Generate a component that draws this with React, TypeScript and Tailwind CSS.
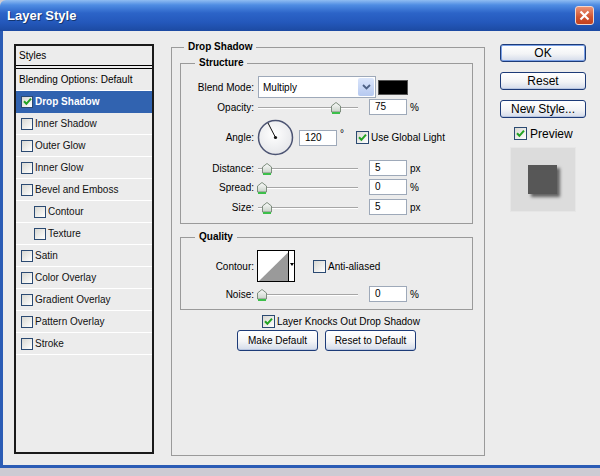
import React from "react";

type Item = { label: string; checked?: boolean; indent?: boolean; selected?: boolean };

const items: Item[] = [
  { label: "Drop Shadow", checked: true, selected: true },
  { label: "Inner Shadow" },
  { label: "Outer Glow" },
  { label: "Inner Glow" },
  { label: "Bevel and Emboss" },
  { label: "Contour", indent: true },
  { label: "Texture", indent: true },
  { label: "Satin" },
  { label: "Color Overlay" },
  { label: "Gradient Overlay" },
  { label: "Pattern Overlay" },
  { label: "Stroke" },
];

function CheckBox({ checked = false, small = false }: { checked?: boolean; small?: boolean }) {
  return (
    <span
      className={`flex shrink-0 items-center justify-center border border-[#2b4a72] bg-[linear-gradient(135deg,#d8d8d2,#ffffff)] ${
        small ? "h-[12px] w-[12px]" : "h-[13px] w-[13px]"
      }`}
    >
      {checked && (
        <svg width="9" height="9" viewBox="0 0 9 9">
          <path d="M1 4.3 L3.4 6.8 L8 1.6" fill="none" stroke="#22a322" strokeWidth="2" />
        </svg>
      )}
    </span>
  );
}

function Thumb() {
  return (
    <svg width="10" height="12" viewBox="0 0 10 12">
      <defs>
        <linearGradient id="thumbFill" x1="0" y1="0" x2="0" y2="1">
          <stop offset="0" stopColor="#fbfcfb" />
          <stop offset="1" stopColor="#c9d2c9" />
        </linearGradient>
      </defs>
      <path d="M0.5 4 L5 0.5 L9.5 4 V10 H0.5 Z" fill="url(#thumbFill)" stroke="#7d8d7d" />
      <path d="M1 11 H9" stroke="#3cbf4a" strokeWidth="2" />
    </svg>
  );
}

function Slider({ at }: { at: number }) {
  return (
    <div className="relative h-[16px] w-[100px] shrink-0">
      <div className="absolute left-0 right-0 top-[8px] h-[2px] border-t border-[#a6a6a6] bg-white" />
      <div className="absolute top-[3px]" style={{ left: at - 5 }}>
        <Thumb />
      </div>
    </div>
  );
}

function NumBox({ value }: { value: string }) {
  return (
    <div className="h-[16px] w-[38px] shrink-0 border border-[#9ea9b9] bg-white pl-[5px] text-[10px] leading-[14px]">
      {value}
    </div>
  );
}

function Label({ children }: { children: React.ReactNode }) {
  return <div className="w-[73px] shrink-0 text-right text-[10px]">{children}</div>;
}

function SliderRow({ label, at, value, unit, className }: { label: string; at: number; value: string; unit: string; className: string }) {
  return (
    <div className={`flex h-[16px] items-center ${className}`}>
      <Label>{label}</Label>
      <div className="ml-[4px]">
        <Slider at={at} />
      </div>
      <div className="ml-[11px]">
        <NumBox value={value} />
      </div>
      <span className="ml-[3px] text-[10px]">{unit}</span>
    </div>
  );
}

function XpButton({ children, isDefault = false, className = "" }: { children: React.ReactNode; isDefault?: boolean; className?: string }) {
  return (
    <div
      className={`flex items-center justify-center rounded-[3px] border border-[#1d3b78] bg-[linear-gradient(to_bottom,#ffffff,#f3f4f6_55%,#d3dbea)] ${
        isDefault ? "shadow-[inset_0_0_0_1px_#7aa0e6]" : "shadow-[inset_0_-1px_0_#b9c6e0]"
      } ${className}`}
    >
      {children}
    </div>
  );
}

function Legend({ children, className = "" }: { children: React.ReactNode; className?: string }) {
  return <legend className={`px-[4px] text-[10px] font-bold leading-[12px] ${className}`}>{children}</legend>;
}

function StylesList() {
  return (
    <div className="ml-[11px] mt-[13px] h-[410px] w-[140px] shrink-0 border-2 border-[#1a1a1a]">
      <div className="flex h-[23px] items-center border-b-[4px] border-double border-black pl-[3px] text-[10px]">Styles</div>
      <div className="flex h-[22px] items-center border-b border-white pl-[3px] text-[10px]">Blending Options: Default</div>
      {items.map((it) => (
        <div
          key={it.label}
          className={`flex h-[22px] items-center gap-[2px] border-b text-[10px] ${
            it.selected ? "border-[#3163b0] bg-[#3163b0] font-bold text-white" : "border-white text-[#111]"
          } ${it.indent ? "pl-[18px]" : "pl-[5px]"}`}
        >
          <CheckBox checked={it.checked} small />
          <span>{it.label}</span>
        </div>
      ))}
    </div>
  );
}

function AngleDial() {
  return (
    <svg width="37" height="37" viewBox="0 0 37 37">
      <defs>
        <radialGradient id="dialFill" cx="0.45" cy="0.4" r="0.6">
          <stop offset="0" stopColor="#ffffff" />
          <stop offset="1" stopColor="#e6e7ea" />
        </radialGradient>
      </defs>
      <circle cx="18.5" cy="18.5" r="17" fill="url(#dialFill)" stroke="#4c5473" strokeWidth="1.5" />
      <path d="M18.5 18.5 L11 4" stroke="#111" strokeWidth="1" />
      <circle cx="18.5" cy="18.5" r="1.6" fill="#111" />
    </svg>
  );
}

function ContourPreview() {
  return (
    <svg width="38" height="32" viewBox="0 0 38 32">
      <rect x="0.5" y="0.5" width="37" height="31" fill="#fff" stroke="#000" />
      <polygon points="2,31 31.5,2 31.5,31" fill="#9a9a9a" />
      <path d="M31.5 1 V31" stroke="#000" />
      <polygon points="33,13 37,13 35,16" fill="#000" />
    </svg>
  );
}

function DropShadowPanel() {
  return (
    <fieldset className="ml-[17px] mt-[10px] h-[415px] w-[314px] shrink-0 border border-[#9a9a9a]">
      <Legend className="ml-[12px]">Drop Shadow</Legend>
      <div className="pl-[8px] pt-[4px]">
        <fieldset className="w-[293px] border border-[#9a9a9a] pb-[8px] pt-[7px]">
          <Legend className="ml-[14px]">Structure</Legend>
          <div className="flex h-[22px] items-center">
            <Label>Blend Mode:</Label>
            <div className="ml-[4px] flex h-[22px] w-[118px] items-center border border-[#9ea9b9] bg-white pl-[4px] text-[10px]">
              <span className="flex-1">Multiply</span>
              <span className="mr-[1px] flex h-[18px] w-[16px] items-center justify-center rounded-[2px] bg-[linear-gradient(to_bottom,#dbe6fb,#b6c9f0)]">
                <svg width="9" height="6" viewBox="0 0 9 6">
                  <path d="M1 1 L4.5 4.5 L8 1" fill="none" stroke="#4d6185" strokeWidth="1.8" />
                </svg>
              </span>
            </div>
            <div className="ml-[2px] h-[15px] w-[30px] border border-[#555] bg-black" />
          </div>
          <SliderRow className="mt-[1px]" label="Opacity:" at={78} value="75" unit="%" />
          <div className="mt-[4px] flex h-[37px] items-center">
            <Label>Angle:</Label>
            <div className="ml-[3px]">
              <AngleDial />
            </div>
            <div className="ml-[5px]">
              <NumBox value="120" />
            </div>
            <span className="ml-[3px] self-start pt-[10px] text-[10px] leading-[10px]">°</span>
            <div className="ml-[12px]">
              <CheckBox checked />
            </div>
            <span className="ml-[2px] text-[10px]">Use Global Light</span>
          </div>
          <SliderRow className="mt-[4px]" label="Distance:" at={9} value="5" unit="px" />
          <SliderRow className="mt-[3px]" label="Spread:" at={4} value="0" unit="%" />
          <SliderRow className="mt-[4px]" label="Size:" at={9} value="5" unit="px" />
        </fieldset>

        <fieldset className="mt-[7px] w-[293px] border border-[#9a9a9a] pb-[7px] pt-[7px]">
          <Legend className="ml-[14px]">Quality</Legend>
          <div className="flex h-[32px] items-center">
            <Label>Contour:</Label>
            <div className="ml-[3px]">
              <ContourPreview />
            </div>
            <div className="ml-[18px]">
              <CheckBox />
            </div>
            <span className="ml-[2px] text-[10px]">Anti-aliased</span>
          </div>
          <SliderRow className="mt-[4px]" label="Noise:" at={4} value="0" unit="%" />
        </fieldset>
      </div>

      <div className="ml-[90px] mt-[5px] flex h-[13px] items-center">
        <CheckBox checked />
        <span className="ml-[2px] text-[10px]">Layer Knocks Out Drop Shadow</span>
      </div>
      <div className="ml-[65px] mt-[2px] flex gap-[7px] text-[10px]">
        <XpButton className="h-[21px] w-[81px]">Make Default</XpButton>
        <XpButton className="h-[21px] w-[91px]">Reset to Default</XpButton>
      </div>
    </fieldset>
  );
}

function RightColumn() {
  return (
    <div className="ml-[15px] mt-[13px] flex w-[86px] shrink-0 flex-col text-[12px]">
      <XpButton isDefault className="h-[18px]">OK</XpButton>
      <XpButton className="mt-[10px] h-[18px]">Reset</XpButton>
      <XpButton className="mt-[10px] h-[18px]">New Style...</XpButton>
      <div className="mt-[9px] flex h-[13px] items-center pl-[14px]">
        <CheckBox checked />
        <span className="ml-[3px]">Preview</span>
      </div>
      <div className="ml-[10px] mt-[7px] h-[65px] w-[66px] border border-[#e6e6e6] bg-[#dcdcdc] pl-[17px] pt-[17px]">
        <div className="h-[29px] w-[29px] bg-[#575757] shadow-[3px_3px_3px_rgba(0,0,0,0.55)]" />
      </div>
    </div>
  );
}

export default function App() {
  return (
    <div className="h-[476px] w-[600px] overflow-hidden bg-[#cdcbd3] font-['Liberation_Sans',Arial,sans-serif] text-black">
      <div className="flex h-[31px] items-center justify-between rounded-tl-[6px] bg-[linear-gradient(to_bottom,#90bdf2_0%,#4f8de3_16%,#2c64c8_42%,#2458bb_72%,#1c4aa2_100%)] pl-[7px] pr-[6px]">
        <span className="text-[13px] font-bold text-white [text-shadow:1px_1px_0_#14356f]">Layer Style</span>
        <div className="flex h-[19px] w-[19px] items-center justify-center rounded-[3px] border border-[#f3d6cc] bg-[linear-gradient(to_bottom,#ec9275,#d0532f_60%,#c2401f)]">
          <svg width="11" height="11" viewBox="0 0 11 11">
            <path d="M1.5 1.5 L9.5 9.5 M9.5 1.5 L1.5 9.5" stroke="#fff" strokeWidth="2.2" />
          </svg>
        </div>
      </div>
      <div className="flex h-[437px] items-start border-b-[3px] border-l-[3px] border-[#2b5cb5] bg-[#ececec]">
        <StylesList />
        <DropShadowPanel />
        <RightColumn />
      </div>
    </div>
  );
}
